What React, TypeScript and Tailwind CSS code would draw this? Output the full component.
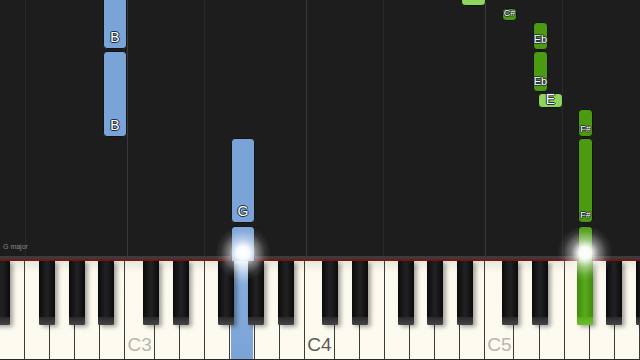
import React from "react";

type Note = {
  x: number;
  w: number;
  top: number;
  bottom: number;
  kind: "blue" | "green" | "lime";
  label?: string;
  small?: boolean;
  open?: boolean;
};

const KEY_W = 640 / 25;

const whiteKeys = [
  "E2", "F2", "G2", "A2", "B2",
  "C3", "D3", "E3", "F3", "G3", "A3", "B3",
  "C4", "D4", "E4", "F4", "G4", "A4", "B4",
  "C5", "D5", "E5", "F5", "G5", "A5",
];

// boundary index on the white keys, and how far the key sits off that boundary
const blackKeys = [
  { name: "D#2", at: 0, off: 2 },
  { name: "F#2", at: 2, off: -4 },
  { name: "G#2", at: 3, off: 0 },
  { name: "A#2", at: 4, off: 4 },
  { name: "C#3", at: 6, off: -2.5 },
  { name: "D#3", at: 7, off: 2 },
  { name: "F#3", at: 9, off: -4 },
  { name: "G#3", at: 10, off: 0 },
  { name: "A#3", at: 11, off: 4 },
  { name: "C#4", at: 13, off: -2.5 },
  { name: "D#4", at: 14, off: 2 },
  { name: "F#4", at: 16, off: -4 },
  { name: "G#4", at: 17, off: 0 },
  { name: "A#4", at: 18, off: 4 },
  { name: "C#5", at: 20, off: -2.5 },
  { name: "D#5", at: 21, off: 2 },
  { name: "F#5", at: 23, off: -4 },
  { name: "G#5", at: 24, off: 0 },
  { name: "A#5", at: 25, off: 4 },
];

const notes: Note[] = [
  { x: 103, w: 24, top: -10, bottom: 49, kind: "blue", label: "B" },
  { x: 103, w: 24, top: 51, bottom: 137, kind: "blue", label: "B" },
  { x: 231, w: 24, top: 138, bottom: 223, kind: "blue", label: "G" },
  { x: 231, w: 24, top: 226, bottom: 262, kind: "blue", open: true },
  { x: 461, w: 25, top: -10, bottom: 6, kind: "lime" },
  { x: 502, w: 15, top: 8, bottom: 21, kind: "green", label: "C#", small: true },
  { x: 533, w: 15, top: 22, bottom: 50, kind: "green", label: "Eb" },
  { x: 533, w: 15, top: 51, bottom: 92, kind: "green", label: "Eb" },
  { x: 538, w: 25, top: 93, bottom: 108, kind: "lime", label: "E" },
  { x: 578, w: 15, top: 109, bottom: 137, kind: "green", label: "F#", small: true },
  { x: 578, w: 15, top: 138, bottom: 223, kind: "green", label: "F#", small: true },
  { x: 578, w: 15, top: 226, bottom: 262, kind: "green", open: true },
];

const gridLines = [
  { x: 25.6, strong: false },
  { x: 128, strong: true },
  { x: 204.8, strong: false },
  { x: 307.2, strong: true },
  { x: 384, strong: false },
  { x: 486.4, strong: true },
  { x: 563.2, strong: false },
];

const NoteBlock = ({ note }: { note: Note }) => {
  const color =
    note.kind === "blue"
      ? "bg-[#7aa3d8]"
      : note.kind === "green"
        ? "bg-[#4c9a12]"
        : "bg-[#8ed55c]";
  return (
    <div
      className={`absolute flex flex-col items-center justify-end border border-[#141416] ${color} ${
        note.open ? "rounded-t-[4px] border-b-0" : "rounded-[4px]"
      } ${note.small ? "pb-[2px]" : note.kind === "lime" ? "pb-[1px]" : "pb-[4px]"}`}
      style={{
        left: note.x,
        top: note.top,
        width: note.w,
        height: note.bottom - note.top,
      }}
    >
      {note.label && (
        <span
          className={`leading-none text-white ${
            note.small ? "text-[9px]" : note.label === "Eb" ? "text-[11px]" : "text-[14px]"
          }`}
          style={{
            fontFamily: '"Liberation Sans", Arial, sans-serif',
            textShadow:
              "0 0 1px #1a2230, 1px 0 0 #273040, -1px 0 0 #273040, 0 1px 0 #273040, 0 -1px 0 #273040",
          }}
        >
          {note.label}
        </span>
      )}
    </div>
  );
};

const Glow = ({ x, y }: { x: number; y: number }) => (
  <div
    className="pointer-events-none absolute h-[56px] w-[56px] rounded-full bg-[radial-gradient(circle,rgba(255,255,255,1)_0%,rgba(255,255,255,0.95)_16%,rgba(255,255,255,0.45)_34%,rgba(255,255,255,0.1)_55%,rgba(255,255,255,0)_70%)]"
    style={{ left: x - 28, top: y - 28 }}
  />
);

export default function App() {
  return (
    <div
      className="relative flex h-[360px] w-[640px] flex-col overflow-hidden bg-[#1d1d1e]"
      style={{ fontFamily: '"Liberation Sans", Arial, sans-serif' }}
    >
      {/* falling notes */}
      <div className="relative h-[256px] shrink-0">
        {gridLines.map((g) => (
          <div
            key={g.x}
            className={`absolute top-0 h-full w-px ${g.strong ? "bg-[#3a3a3c]" : "bg-[#29292b]"}`}
            style={{ left: Math.round(g.x) - 1 }}
          />
        ))}
        {notes.map((n, i) => (
          <NoteBlock key={i} note={n} />
        ))}
        <span className="absolute bottom-[4px] left-[3px] text-[7px] text-[#8a8a8a]">
          G major
        </span>
      </div>
      <div className="h-[3px] shrink-0 bg-[#3b3b3b]" />
      <div className="h-[2px] shrink-0 bg-[#7a1616]" />

      {/* keyboard */}
      <div className="relative flex h-[99px] shrink-0 border-b border-[#2a2a2a] bg-[#2a2a2a]">
        {whiteKeys.map((k) => (
          <div
            key={k}
            className="relative flex flex-1 items-end border-r border-[#3c3c3c] bg-[linear-gradient(to_bottom,#e9e6da_0%,#fcf9ee_12%,#fdfaf0_100%)] px-[2px] pb-[5px]"
          >
            {k === "G3" && (
              <div className="absolute inset-y-0 left-[1px] right-[1px] bg-[linear-gradient(to_bottom,#c9dcf3_0%,#86acdc_25%,#7aa3d8_100%)]" />
            )}
            {(k === "C3" || k === "C4" || k === "C5") && (
              <span
                className={`relative text-[19px] leading-none ${
                  k === "C4" ? "text-[#5a5a5a]" : "text-[#b8b6ae]"
                }`}
              >
                {k}
              </span>
            )}
          </div>
        ))}
        {blackKeys.map((b) => {
          const pressed = b.name === "F#5";
          return (
            <div
              key={b.name}
              className={`absolute top-0 flex h-[64px] w-[16px] flex-col justify-end rounded-b-[2px] shadow-[3px_2px_4px_rgba(0,0,0,0.35)] ${
                pressed
                  ? "bg-[linear-gradient(to_right,#3f8a0c,#5aab1c_50%,#3f8a0c)]"
                  : "bg-[linear-gradient(to_right,#0a0a0a,#222224_50%,#0a0a0a)]"
              }`}
              style={{ left: b.at * KEY_W + b.off - 8 }}
            >
              <div
                className={`h-[8px] rounded-b-[2px] ${
                  pressed
                    ? "bg-[linear-gradient(to_bottom,#5aab1c,#6bbf2a)]"
                    : "bg-[linear-gradient(to_bottom,#2a2a2c,#444446)]"
                }`}
              />
            </div>
          );
        })}
      </div>

      <Glow x={243} y={253} />
      <Glow x={585} y={253} />
    </div>
  );
}
